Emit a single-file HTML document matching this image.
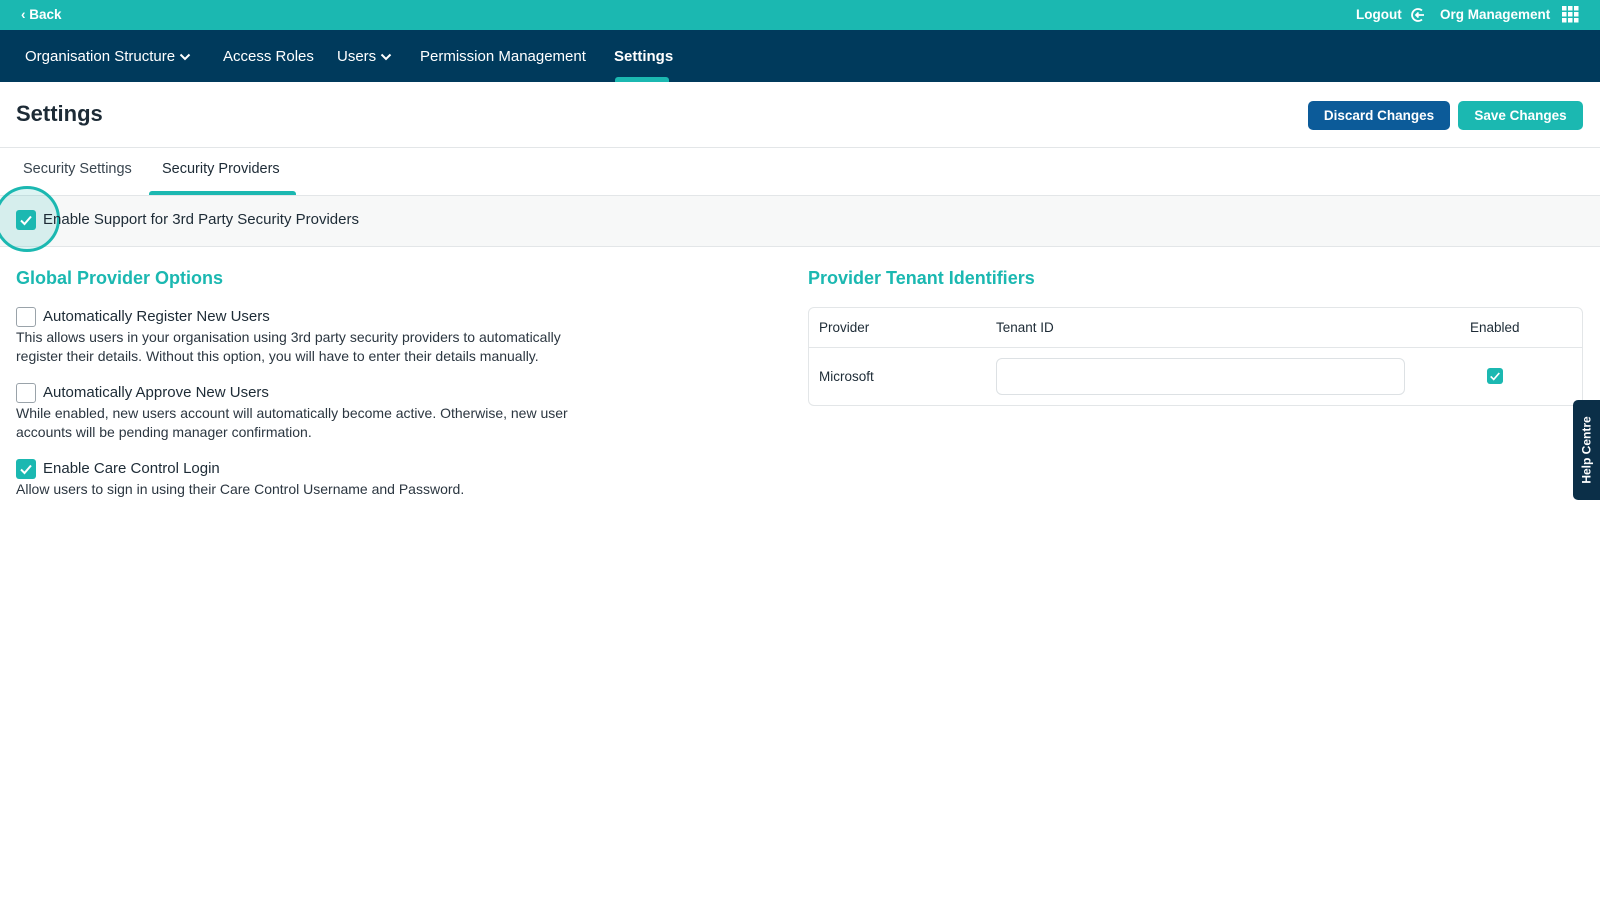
<!DOCTYPE html>
<html><head><style>
*{box-sizing:border-box;margin:0;padding:0}
body{width:1600px;height:900px;overflow:hidden;font-family:"Liberation Sans",sans-serif;color:#1d2b36;background:#fff;position:relative}
.top{height:30px;background:#1bb8b1;color:#fff;font-size:13.5px;font-weight:bold;position:relative}
.nav{height:52px;background:#003a5c;color:#fff;font-size:15px;position:relative}
.nav span{position:absolute;top:18px}
.nav svg{vertical-align:middle;margin-left:4px}
.abs{position:absolute}
.cb{position:absolute;width:20px;height:20px;border-radius:3px;background:#1bb8b1}
.cb svg{position:absolute;left:3px;top:3px}
.ub{position:absolute;width:20px;height:20px;border-radius:3px;border:1.5px solid #9aa3aa;background:#fff}
.desc{font-size:14px;line-height:19px;color:#2b3640}
.lbl{font-size:15px;color:#1d2b36}
h2{font-size:18px;color:#1bb8b1;font-weight:bold}
</style></head><body>
<div class="top">
 <span class="abs" style="left:21px;top:7px">‹ Back</span>
 <span class="abs" style="left:1356px;top:7px">Logout</span>
 <svg class="abs" style="left:1410px;top:7px" width="16" height="16" viewBox="0 0 16 16" fill="none" stroke="#fff" stroke-width="1.8"><path d="M12 3.5A6 6 0 1 0 12 12.5"/><path d="M14 8H6M8.5 5.5L6 8l2.5 2.5"/></svg>
 <span class="abs" style="left:1440px;top:7px">Org Management</span>
 <svg class="abs" style="left:1562px;top:6px" width="17" height="17" viewBox="0 0 17 17" fill="#fff"><rect x="0" y="0" width="4.5" height="4.5"/><rect x="6" y="0" width="4.5" height="4.5"/><rect x="12" y="0" width="4.5" height="4.5"/><rect x="0" y="6" width="4.5" height="4.5"/><rect x="6" y="6" width="4.5" height="4.5"/><rect x="12" y="6" width="4.5" height="4.5"/><rect x="0" y="12" width="4.5" height="4.5"/><rect x="6" y="12" width="4.5" height="4.5"/><rect x="12" y="12" width="4.5" height="4.5"/></svg>
</div>
<div class="nav">
 <span style="left:25px">Organisation Structure<svg width="12" height="8" viewBox="0 0 12 8" fill="none" stroke="#fff" stroke-width="2"><path d="M1.5 1.5L6 6l4.5-4.5"/></svg></span>
 <span style="left:223px">Access Roles</span>
 <span style="left:337px">Users<svg width="12" height="8" viewBox="0 0 12 8" fill="none" stroke="#fff" stroke-width="2"><path d="M1.5 1.5L6 6l4.5-4.5"/></svg></span>
 <span style="left:420px">Permission Management</span>
 <span style="left:614px;font-weight:bold">Settings</span>
 <div class="abs" style="left:615px;top:47px;width:54px;height:5px;background:#1bb8b1;border-radius:3px 3px 0 0"></div>
</div>
<div class="abs" style="left:16px;top:101px;font-size:22px;font-weight:bold">Settings</div>
<div class="abs" style="left:1308px;top:101px;width:142px;height:29px;background:#0c5b99;border-radius:5px;color:#fff;font-size:13.5px;font-weight:bold;text-align:center;line-height:29px">Discard Changes</div>
<div class="abs" style="left:1458px;top:101px;width:125px;height:29px;background:#1bb8b1;border-radius:5px;color:#fff;font-size:13.5px;font-weight:bold;text-align:center;line-height:29px">Save Changes</div>
<div class="abs" style="left:0;top:147px;width:1600px;height:1px;background:#e3e6e8"></div>
<div class="abs" style="left:23px;top:161px;font-size:14.5px;color:#3a4650">Security Settings</div>
<div class="abs" style="left:162px;top:161px;font-size:14.5px">Security Providers</div>
<div class="abs" style="left:149px;top:191px;width:147px;height:5px;background:#1bb8b1;border-radius:3px 3px 0 0"></div>
<div class="abs" style="left:0;top:195px;width:1600px;height:52px;background:#f7f8f8;border-top:1px solid #e3e6e8;border-bottom:1px solid #e3e6e8"></div>
<div class="abs" style="left:-6px;top:186px;width:66px;height:66px;border-radius:50%;background:rgba(27,184,177,0.15);border:3px solid #1bb8b1"></div>
<div class="cb" style="left:16px;top:210px"><svg width="14" height="14" viewBox="0 0 14 14" fill="none" stroke="#fff" stroke-width="2"><path d="M2 7.5l3.5 3.5L12 3.5"/></svg></div>
<div class="abs lbl" style="left:43px;top:211px">Enable Support for 3rd Party Security Providers</div>

<h2 class="abs" style="left:16px;top:268px">Global Provider Options</h2>
<div class="ub" style="left:16px;top:307px"></div>
<div class="abs lbl" style="left:43px;top:308px">Automatically Register New Users</div>
<div class="abs desc" style="left:16px;top:328px">This allows users in your organisation using 3rd party security providers to automatically<br>register their details. Without this option, you will have to enter their details manually.</div>
<div class="ub" style="left:16px;top:383px"></div>
<div class="abs lbl" style="left:43px;top:384px">Automatically Approve New Users</div>
<div class="abs desc" style="left:16px;top:404px">While enabled, new users account will automatically become active. Otherwise, new user<br>accounts will be pending manager confirmation.</div>
<div class="cb" style="left:16px;top:459px"><svg width="14" height="14" viewBox="0 0 14 14" fill="none" stroke="#fff" stroke-width="2"><path d="M2 7.5l3.5 3.5L12 3.5"/></svg></div>
<div class="abs lbl" style="left:43px;top:460px">Enable Care Control Login</div>
<div class="abs desc" style="left:16px;top:480px">Allow users to sign in using their Care Control Username and Password.</div>

<h2 class="abs" style="left:808px;top:268px">Provider Tenant Identifiers</h2>
<div class="abs" style="left:808px;top:307px;width:775px;height:99px;border:1px solid #e3e6e8;border-radius:6px"></div>
<div class="abs" style="left:809px;top:347px;width:773px;height:1px;background:#e3e6e8"></div>
<div class="abs lbl" style="left:819px;top:320px;font-size:13.5px">Provider</div>
<div class="abs lbl" style="left:996px;top:320px;font-size:13.5px">Tenant ID</div>
<div class="abs lbl" style="left:1470px;top:320px;font-size:13.5px">Enabled</div>
<div class="abs lbl" style="left:819px;top:369px;font-size:13.5px">Microsoft</div>
<div class="abs" style="left:996px;top:358px;width:409px;height:37px;border:1px solid #dde1e4;border-radius:6px"></div>
<div class="cb" style="left:1487px;top:368px;width:16px;height:16px"><svg style="left:2px;top:2px" width="12" height="12" viewBox="0 0 14 14" fill="none" stroke="#fff" stroke-width="2"><path d="M2 7.5l3.5 3.5L12 3.5"/></svg></div>
<div class="abs" style="left:1573px;top:400px;width:27px;height:100px;background:#0b2f48;border-radius:5px 0 0 5px"></div>
<div class="abs" style="left:1573px;top:400px;width:27px;height:100px;display:flex;align-items:center;justify-content:center"><span style="transform:rotate(-90deg);white-space:nowrap;color:#fff;font-size:12px;font-weight:bold">Help Centre</span></div>
</body></html>
